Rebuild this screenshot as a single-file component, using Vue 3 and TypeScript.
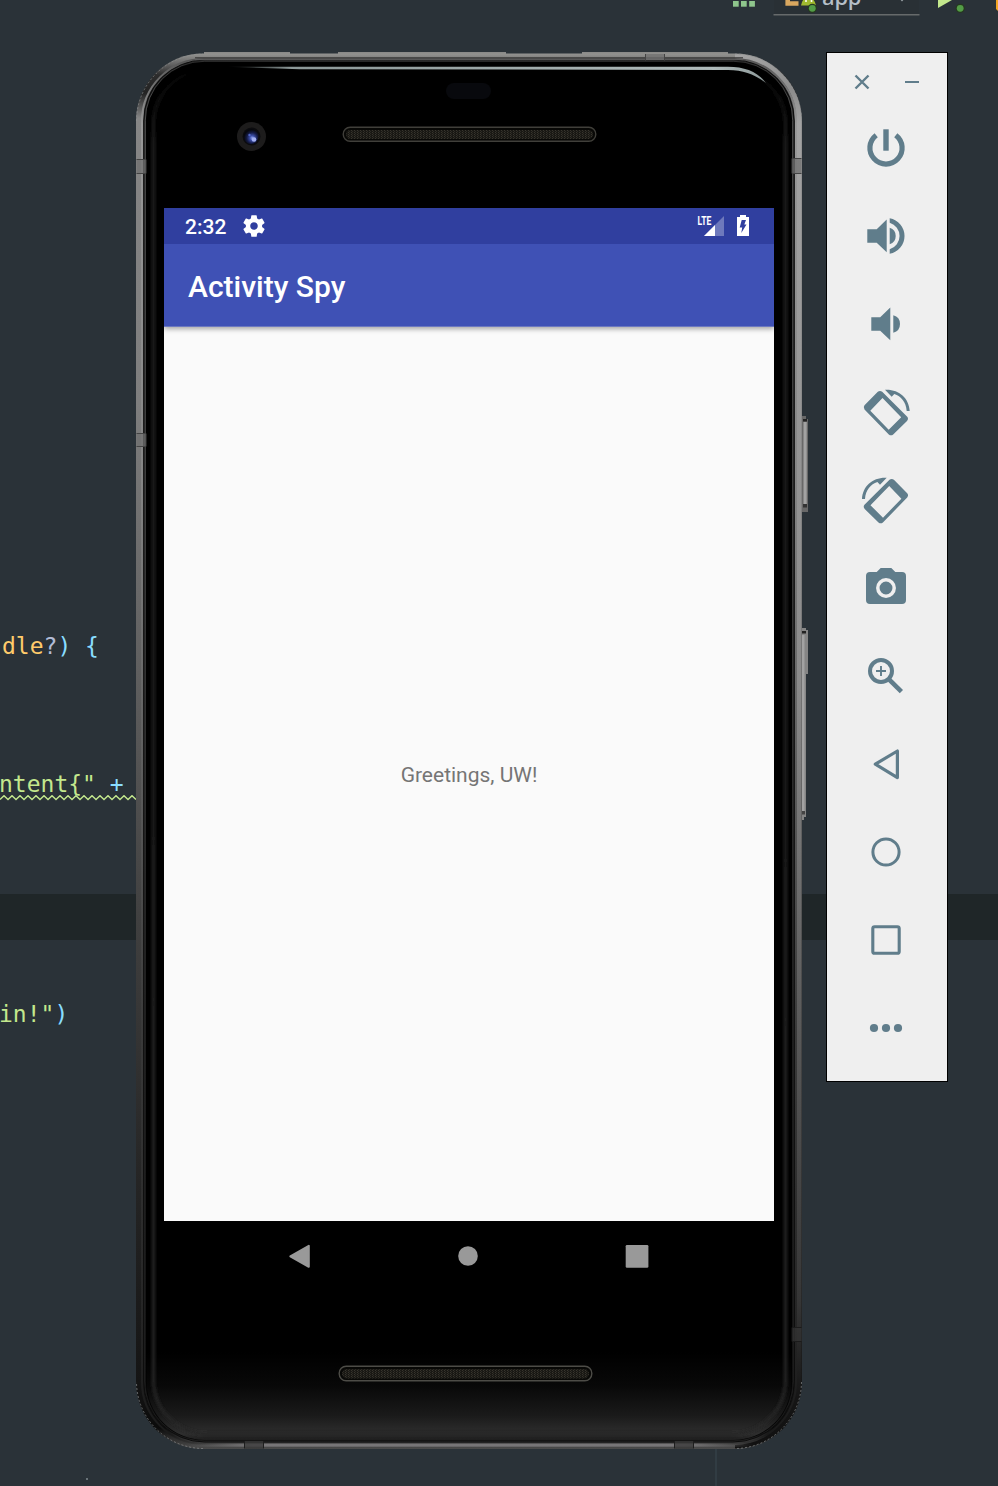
<script setup lang="ts">
interface Segment { text: string; kind: string }
interface CodeLine { id: string; parts: Segment[] }

const codeLines: CodeLine[] = [
  { id: 'param', parts: [{ text: 'dle', kind: 'type' }, { text: '?', kind: 'plain' }, { text: ') {', kind: 'punct' }] },
  { id: 'intent', parts: [{ text: 'ntent{"', kind: 'string' }, { text: ' +', kind: 'punct' }] },
  { id: 'call', parts: [{ text: 'in!"', kind: 'string' }, { text: ')', kind: 'punct' }] },
]

const squiggle: string = 'M0 4.5' + Array.from({ length: 17 }, () => 'l4 -3.8l4 3.8').join('')

const phoneShape =
  'M21.8 9.8Q24 8 26.2 9.8L51 34.6Q53 36.8 51 39L37.2 52.4Q35 54.3 32.8 52.4L8.5 27.6Q6.8 25.3 8.5 23.2ZM26.5 16L14.3 28.7L32.7 47.7L45.2 35.3Z'
const rotateArrow = 'M29 7.7C43 7 53 16 53.7 29H50.7C50 20 45 14 38.3 12L35.7 14.7Z'

const controls: string[] = [
  'power', 'volume-up', 'volume-down', 'rotate-left', 'rotate-right',
  'camera', 'zoom', 'back', 'home', 'overview', 'more',
]
</script>

<template>
  <main class="desktop">
    <svg class="ide-bar" viewBox="0 0 278 20" width="278" height="20">
      <g fill="#8ec58c">
        <rect x="13" y="1" width="5.7" height="5.7" /><rect x="21" y="1" width="5.7" height="5.7" /><rect x="29.2" y="1" width="5.7" height="5.7" />
      </g>
      <rect x="54" y="0" width="145" height="14" fill="#293035" />
      <path d="M53.5 14.7H199.5" stroke="#666a6b" stroke-width="1.6" />
      <path d="M67.7 0V3.5H78.5" fill="none" stroke="#d9a75f" stroke-width="4.6" />
      <path d="M81 5.5Q82 -2 89 -3Q95 -1 96 5.5Z" fill="#9fb92f" />
      <circle cx="86" cy="1" r="1" fill="#fff" /><circle cx="91.5" cy="1" r="1" fill="#fff" />
      <circle cx="92.3" cy="8.3" r="4.6" fill="#26391f" /><circle cx="92.3" cy="8.3" r="3.4" fill="#539d47" />
      <text x="102" y="4.5" class="config-name" textLength="39.5">app</text>
      <path d="M179 -2L182 1.5L185 -2Z" fill="#9da5a9" />
      <path d="M218 -8V8L232 0Z" fill="#c3e88d" />
      <circle cx="240.2" cy="8.3" r="4.6" fill="#26391f" /><circle cx="240.2" cy="8.3" r="3.4" fill="#539d47" />
      <path d="M276 0H278V11L276 9Z" fill="#f5a623" />
    </svg>

    <div class="current-line"></div>
    <div class="margin-guide"></div>
    <div class="speck"></div>
    <div v-for="line in codeLines" :key="line.id" class="code" :class="line.id">
      <span v-for="part in line.parts" :key="part.text" :class="part.kind">{{ part.text }}</span>
      <svg v-if="line.id === 'intent'" class="squiggle" width="136" height="6"><path :d="squiggle" fill="none" stroke="#c3e88d" stroke-width="1.4" /></svg>
    </div>

    <section class="phone">
      <svg class="chassis" viewBox="130 46 684 1410" width="684" height="1410">
        <defs>
          <linearGradient id="rim" gradientUnits="userSpaceOnUse" x1="0" y1="54" x2="0" y2="1449">
            <stop offset="0" stop-color="#92928f" /><stop offset=".007" stop-color="#666" /><stop offset=".015" stop-color="#2c2c2c" /><stop offset=".028" stop-color="#232323" />
            <stop offset=".046" stop-color="#868686" /><stop offset=".25" stop-color="#7e7e7e" /><stop offset=".45" stop-color="#5e5e5e" />
            <stop offset=".62" stop-color="#404040" /><stop offset=".8" stop-color="#262626" /><stop offset=".95" stop-color="#151515" />
            <stop offset=".985" stop-color="#0b0b0b" /><stop offset=".994" stop-color="#333" /><stop offset="1" stop-color="#4c4c4c" />
          </linearGradient>
          <linearGradient id="rimLight" gradientUnits="userSpaceOnUse" x1="0" y1="54" x2="0" y2="1449">
            <stop offset="0" stop-color="#505050" /><stop offset=".05" stop-color="#999" /><stop offset=".3" stop-color="#868686" />
            <stop offset=".5" stop-color="#606060" /><stop offset=".7" stop-color="#3a3a3a" /><stop offset=".9" stop-color="#262626" /><stop offset=".99" stop-color="#1a1a1a" /><stop offset="1" stop-color="#444" />
          </linearGradient>
          <linearGradient id="rightRim" gradientUnits="userSpaceOnUse" x1="0" y1="54" x2="0" y2="1440">
            <stop offset="0" stop-color="#a3a3a3" /><stop offset=".025" stop-color="#8b8b8b" /><stop offset=".05" stop-color="#a3a3a3" /><stop offset=".45" stop-color="#8b8b8b" /><stop offset=".7" stop-color="#5a5a5a" /><stop offset=".9" stop-color="#363636" /><stop offset=".97" stop-color="#151515" /><stop offset="1" stop-color="#111" />
          </linearGradient>
          <linearGradient id="chin" x1="0" y1="0" x2="0" y2="1">
            <stop offset="0" stop-color="#000" /><stop offset=".38" stop-color="#080808" /><stop offset=".72" stop-color="#1a1a1a" /><stop offset=".93" stop-color="#2e2e2e" /><stop offset="1" stop-color="#1e1e1e" />
          </linearGradient>
          <linearGradient id="bottomRim" x1="0" y1="0" x2="1" y2="0">
            <stop offset="0" stop-color="#777" stop-opacity="0" /><stop offset=".12" stop-color="#777577" /><stop offset=".88" stop-color="#777577" /><stop offset="1" stop-color="#777" stop-opacity="0" />
          </linearGradient>
          <linearGradient id="glint" gradientUnits="userSpaceOnUse" x1="226" y1="0" x2="768" y2="0">
            <stop offset="0" stop-color="#8c9898" stop-opacity="0" /><stop offset=".12" stop-color="#8c9898" /><stop offset=".9" stop-color="#b0bbbb" /><stop offset="1" stop-color="#8c9898" />
          </linearGradient>
          <linearGradient id="sheen" gradientUnits="userSpaceOnUse" x1="0" y1="64" x2="0" y2="1440">
            <stop offset="0" stop-color="#222" stop-opacity="0" /><stop offset=".06" stop-color="#222" /><stop offset="1" stop-color="#262626" />
          </linearGradient>
          <filter id="soft" x="-5%" y="-5%" width="110%" height="110%"><feGaussianBlur stdDeviation="1.4" /></filter>
          <radialGradient id="lens" cx=".58" cy=".6" r=".55">
            <stop offset="0" stop-color="#8fa2f0" /><stop offset=".3" stop-color="#3a4ca5" /><stop offset=".65" stop-color="#141b46" /><stop offset="1" stop-color="#06070c" />
          </radialGradient>
          <pattern id="mesh" width="3" height="2" patternUnits="userSpaceOnUse">
            <rect width="3" height="2" fill="#191814" /><rect width="1" height="1" fill="#38352d" /><rect x="1" y="1" width="1" height="1" fill="#2c2a24" />
          </pattern>
          <clipPath id="glassClip"><rect x="146.5" y="62" width="645" height="1378" rx="58" /></clipPath>
        </defs>

        <g fill="#8a8a88">
          <rect x="204" y="52" width="86" height="3" /><rect x="338" y="52" width="168" height="3" /><rect x="582" y="52" width="146" height="3" />
        </g>
        <g>
          <path d="M801 416H806V419H808V512H801Z" fill="#686868" /><rect x="803.5" y="422" width="3.2" height="84" fill="#a2a2a2" />
          <rect x="803" y="419" width="4" height="2.5" fill="#222" /><rect x="803" y="504" width="4" height="3.5" fill="#333" />
          <path d="M801 628H806V630H808V674H806V817H804V820H801Z" fill="#858585" /><rect x="802" y="635" width="2.5" height="176" fill="#a2a2a2" />
          <rect x="801" y="631" width="5" height="2.5" fill="#222" /><rect x="801" y="811" width="4" height="3.5" fill="#444" />
        </g>
        <rect x="136" y="53.5" width="666" height="1395.5" rx="67" fill="url(#rim)" />
        <path d="M735 56.5A64 64 0 0 1 799 121V1382A64 64 0 0 1 735 1446" fill="none" stroke="url(#rightRim)" stroke-width="5" />
        <path d="M136.5 121A67 67 0 0 1 203 54M735 54A67 67 0 0 1 801.5 121M801.5 1382A67 67 0 0 1 735 1448.5M203 1448.5A67 67 0 0 1 136.5 1382" fill="none" stroke="#8d9092" stroke-opacity=".65" stroke-width="1" stroke-dasharray="2 2" />
        <rect x="142" y="59" width="654" height="1385" rx="62" fill="none" stroke="url(#rimLight)" stroke-width="2" />
        <rect x="143.7" y="60" width="650.6" height="1382" rx="61" fill="#202020" stroke="#0c0c0c" stroke-width="1" />
        <rect x="145.3" y="61.3" width="647.4" height="1379.5" rx="59" fill="#000" stroke="url(#rimLight)" stroke-width="1" stroke-opacity=".5" />
        <rect x="185" y="1443.5" width="568" height="3.2" fill="url(#bottomRim)" />
        <path d="M195 57.8H743" stroke="#303030" stroke-width="1" />
        <path d="M195 59.7H743" stroke="#606060" stroke-width="1" />
        <g clip-path="url(#glassClip)">
          <rect x="146" y="1352" width="646" height="88" fill="url(#chin)" />
          <rect x="153.5" y="70" width="632" height="1364" rx="54" fill="none" stroke="url(#sheen)" stroke-width="3" filter="url(#soft)" />
        </g>
        <g fill="#707070" fill-opacity=".75" stroke="#444" stroke-width="1">
          <path d="M136.5 159.5H146V173.5H136.5M801.5 158.5H792V173.5H801.5M136.5 433.5H146V446.5H136.5M645.5 54V60.5M664.5 54V60.5" />
          <rect x="646" y="54" width="18" height="6" stroke="none" />
          <path d="M801.5 1327.5H792V1341.5H801.5" fill="#333" stroke="#1b1b1b" />
          <path d="M244.5 1441V1448.5M263.5 1441V1448.5M674.5 1441V1448.5M693.5 1441V1448.5" stroke="#1e1e1e" />
          <rect x="245" y="1441" width="18" height="8" fill="#383838" stroke="none" /><rect x="675" y="1441" width="18" height="8" fill="#383838" stroke="none" />
        </g>
        <path d="M226 66.8H728C745 66.8 758 72 766 83C754 74 744 70.4 728 70L300 69.2Z" fill="url(#glint)" />
        <rect x="446" y="83" width="45" height="16" rx="8" fill="#08090d" />
        <circle cx="251.5" cy="136.5" r="14.5" fill="#1d1c1c" /><circle cx="251.5" cy="136.5" r="9" fill="#0b0b0e" /><circle cx="251" cy="136.5" r="7.5" fill="url(#lens)" />
        <circle cx="254" cy="139.5" r="2.3" fill="#a2b0f2" /><circle cx="249.5" cy="135" r="1.2" fill="#5266c8" />
        <rect x="343.2" y="127.3" width="252.6" height="14" rx="7" fill="#080806" stroke="#403f3a" stroke-width="1.4" />
        <rect x="346" y="130" width="247" height="9" rx="4.5" fill="url(#mesh)" />
        <rect x="339.2" y="1366.3" width="252.6" height="14.4" rx="7" fill="#080806" stroke="#4d4c47" stroke-width="1.4" />
        <rect x="342" y="1369" width="247" height="9.5" rx="4.7" fill="url(#mesh)" />
      </svg>

      <div class="screen">
        <header class="status">
          <span class="time">2:32</span>
          <svg class="gear" viewBox="0 0 24 24" width="26" height="26"><path fill="#fff" d="M19.43 12.98c.04-.32.07-.64.07-.98s-.03-.66-.07-.98l2.11-1.65c.19-.15.24-.42.12-.64l-2-3.46c-.12-.22-.39-.3-.61-.22l-2.49 1c-.52-.4-1.08-.73-1.69-.98l-.38-2.65C14.46 2.18 14.25 2 14 2h-4c-.25 0-.46.18-.49.42l-.38 2.65c-.61.25-1.17.59-1.69.98l-2.49-1c-.23-.09-.49 0-.61.22l-2 3.46c-.13.22-.07.49.12.64l2.11 1.65c-.04.32-.07.65-.07.98s.03.66.07.98l-2.11 1.65c-.19.15-.24.42-.12.64l2 3.46c.12.22.39.3.61.22l2.49-1c.52.4 1.08.73 1.69.98l.38 2.65c.03.24.24.42.49.42h4c.25 0 .46-.18.49-.42l.38-2.65c.61-.25 1.17-.59 1.69-.98l2.49 1c.23.09.49 0 .61-.22l2-3.46c.12-.22.07-.49-.12-.64l-2.11-1.65zM12 15.5c-1.93 0-3.5-1.57-3.5-3.5s1.57-3.5 3.5-3.5 3.5 1.57 3.5 3.5-1.57 3.5-3.5 3.5z" /></svg>
          <svg class="radio" viewBox="0 0 54 36" width="54" height="36">
            <path d="M29 8V28H9Z" fill="#fff" fill-opacity=".3" /><path d="M20 17V28H9Z" fill="#fff" />
            <text x="2.6" y="17" textLength="13.8" lengthAdjust="spacingAndGlyphs" class="lte">LTE</text>
            <path fill="#fff" fill-rule="evenodd" d="M45 7H51V9H54V28H42V9H45ZM46.7 12H51L49.3 16.4H51.5L46.3 25L47.2 19.6H44.7Z" />
          </svg>
        </header>
        <div class="appbar"><h1>Activity Spy</h1></div>
        <div class="content"><p>Greetings, UW!</p></div>
      </div>

      <nav class="softkeys">
        <svg viewBox="0 0 28 28" width="28" height="28"><path d="M4.3 14.3L22.8 3.8V24.8Z" fill="#999" stroke="#999" stroke-width="2" stroke-linejoin="round" /></svg>
        <svg viewBox="0 0 28 28" width="28" height="28"><circle cx="14" cy="14" r="9.8" fill="#999" /></svg>
        <svg viewBox="0 0 28 28" width="28" height="28"><rect x="2.7" y="3" width="22.7" height="22.8" rx="1.3" fill="#999" /></svg>
      </nav>
    </section>

    <aside class="toolbar">
      <div class="window-buttons">
        <svg viewBox="0 0 20 20" width="20" height="20"><path d="M3.5 3.5L16.5 16.5M16.5 3.5L3.5 16.5" stroke="#607d8b" stroke-width="2.4" /></svg>
        <svg viewBox="0 0 20 20" width="20" height="20"><path d="M3 10H17" stroke="#607d8b" stroke-width="2" /></svg>
      </div>
      <div v-for="name in controls" :key="name" class="control">
        <svg viewBox="0 0 60 60" width="60" height="60" fill="#607d8b">
          <template v-if="name === 'power'">
            <path d="M20.2 17.2A16.1 16.1 0 1 0 39.8 17.2" fill="none" stroke="#607d8b" stroke-width="5.2" /><rect x="27.3" y="11.3" width="5.4" height="21.4" />
          </template>
          <path v-else-if="name === 'volume-up'" d="M11.3 23.3H20.7L30.7 13.5V46.2L20.7 36.7H11.3ZM33.7 21.8A8.6 8.6 0 0 1 33.7 38.2ZM33.7 12.2A18.1 18.1 0 0 1 33.7 47.8V43.3A13.9 13.9 0 0 0 33.7 16.7Z" />
          <path v-else-if="name === 'volume-down'" d="M15.3 23.3H24.2L34.3 13.5V46.2L24.2 36.7H15.3ZM37.3 21.3A9 9 0 0 1 37.3 38.7Z" />
          <g v-else-if="name === 'rotate-left'"><path :d="phoneShape" fill-rule="evenodd" /><path :d="rotateArrow" /></g>
          <g v-else-if="name === 'rotate-right'" transform="translate(59.7 0) scale(-1 1)"><path :d="phoneShape" fill-rule="evenodd" /><path :d="rotateArrow" /></g>
          <template v-else-if="name === 'camera'">
            <path d="M14 14H20.7L24.7 10H35.3L39.3 14H46Q50 14 50 18V42Q50 46 46 46H14Q10 46 10 42V18Q10 14 14 14Z" /><circle cx="30" cy="30" r="8.2" fill="none" stroke="#efefef" stroke-width="3.5" />
          </template>
          <g v-else-if="name === 'zoom'" fill="none" stroke="#607d8b">
            <circle cx="25" cy="25" r="11" stroke-width="4" /><path d="M20 25H30M25 20V30" stroke-width="1.9" /><path d="M33.5 33.8L45.4 45.7" stroke-width="4.6" />
          </g>
          <path v-else-if="name === 'back'" d="M19.3 30.2L41.4 17V43.6Z" fill="none" stroke="#607d8b" stroke-width="3.2" stroke-linejoin="round" />
          <circle v-else-if="name === 'home'" cx="30" cy="30" r="13.1" fill="none" stroke="#607d8b" stroke-width="3" />
          <rect v-else-if="name === 'overview'" x="16.8" y="16.8" width="26.4" height="26.4" rx="1.8" fill="none" stroke="#607d8b" stroke-width="3.1" />
          <g v-else><circle cx="18" cy="30" r="4.1" /><circle cx="30" cy="30" r="4.1" /><circle cx="42" cy="30" r="4.1" /></g>
        </svg>
      </div>
    </aside>
  </main>
</template>

<style>
body { margin: 0; }
</style>

<style scoped>
.desktop { position: relative; width: 998px; height: 1486px; overflow: hidden; background: #2a3238; }
.ide-bar { position: absolute; left: 720px; top: 0; }
.config-name { font: 500 22px "Noto Sans", sans-serif; fill: #b5bfc8; }
.current-line { position: absolute; left: 0; top: 894px; width: 998px; height: 46px; background: #1f2628; }
.margin-guide { position: absolute; left: 715px; top: 1449px; width: 2px; height: 37px; background: #313c43; }
.speck { position: absolute; left: 86px; top: 1478px; width: 2px; height: 2px; background: #687277; }
.code { position: absolute; left: -1px; height: 32px; font: 0/32px "DejaVu Sans Mono", monospace; white-space: pre; }
.code span { font-size: 23px; }
.param { left: 2px; top: 630px; }
.intent { top: 768px; }
.call { top: 998px; }
.type { color: #ffcb6b; }
.plain { color: #b2bcd6; }
.punct { color: #89ddff; }
.string { color: #c3e88d; }
.squiggle { position: absolute; left: 1px; top: 27px; }
.phone { position: absolute; left: 130px; top: 46px; width: 684px; height: 1410px; }
.chassis { position: absolute; left: 0; top: 0; }
.screen { position: relative; display: flex; flex-direction: column; width: 610px; height: 1013px; margin: 162px 0 0 34px; background: #fafafa; font-family: Roboto, sans-serif; }
.status { display: flex; align-items: center; height: 36px; box-sizing: border-box; padding: 0 25px 0 21px; background: #303f9f; color: #fff; }
.time { width: 56px; font-size: 21px; line-height: 36px; font-weight: 500; padding-top: 2px; }
.radio { margin-left: auto; }
.lte { font: 700 12.8px Roboto, sans-serif; fill: #fff; }
.appbar { display: flex; align-items: center; height: 83px; box-sizing: border-box; padding: 4px 24px 0; background: #3f51b5; color: #fff; box-shadow: 0 2px 5px rgba(0, 0, 0, .35); clip-path: inset(0 0 -10px 0); z-index: 1; border-bottom: 1px solid #6c78c0; }
h1 { margin: 0; font-size: 30px; line-height: 40px; font-weight: 500; }
.content { flex: 1; display: grid; place-items: center; }
.content p { margin: 0; padding-top: 1px; font-size: 21px; color: #757575; }
.softkeys { position: relative; display: flex; justify-content: space-between; width: 364.5px; margin: 21px 0 0 156.2px; }
.toolbar { position: absolute; left: 826px; top: 52px; width: 122px; height: 1030px; box-sizing: border-box; border: 1px solid #000; background: #efefef; }
.window-buttons { display: flex; justify-content: space-between; height: 51px; box-sizing: border-box; padding: 19px 25px 0; }
.control { display: grid; place-items: center; height: 88px; padding-right: 2px; }
</style>
